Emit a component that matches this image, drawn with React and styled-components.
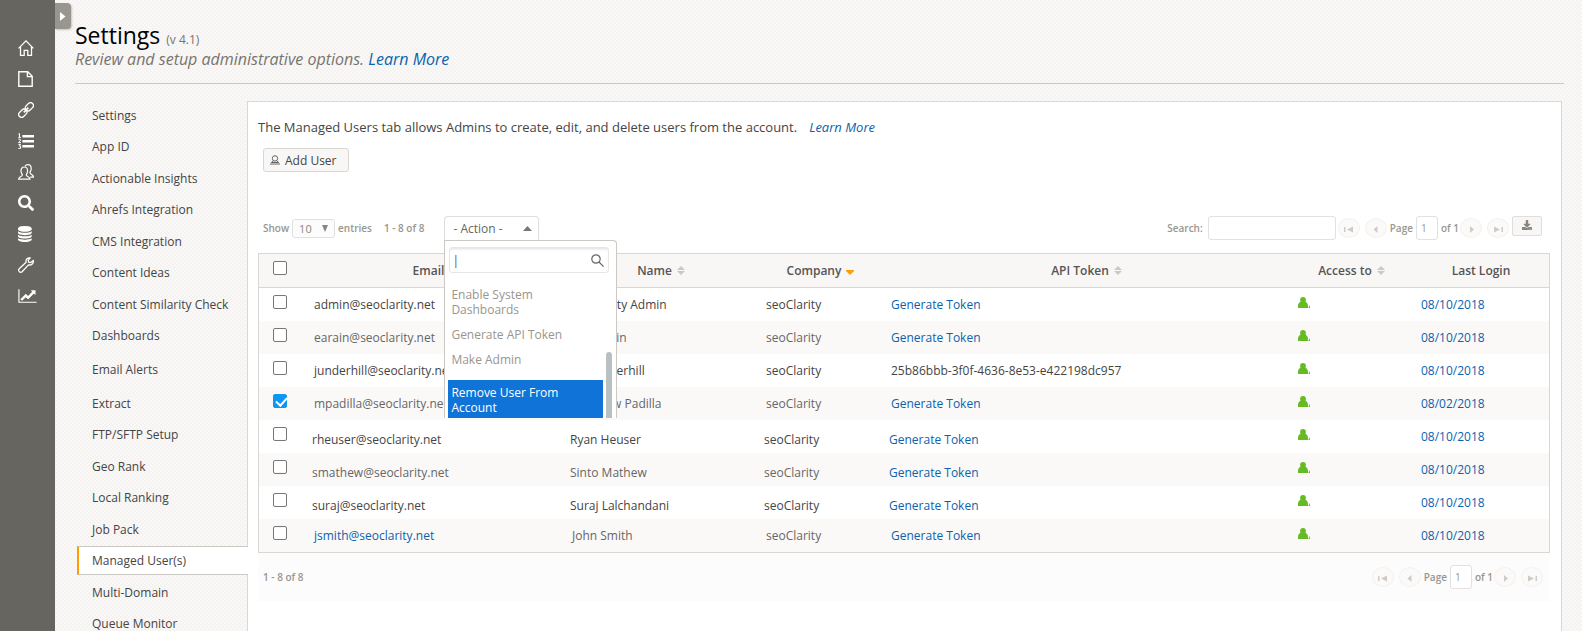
import { useState } from "react";
import styled, { createGlobalStyle, css } from "styled-components";
import { FaSearch, FaDownload } from "react-icons/fa";

const GlobalStyle = createGlobalStyle`
  * {
    box-sizing: border-box;
  }
  body {
    margin: 0;
    color: #444;
    font-family: "Open Sans", sans-serif;
    font-size: 12px;
    line-height: 16px;
    background-color: #f9f8f7;
    background-image:
      radial-gradient(circle at 1px 1px, #f4f3f1 1px, transparent 1px),
      radial-gradient(circle at 3px 3px, #f5f4f3 1px, transparent 1px);
    background-size: 4px 4px;
  }
  button,
  input,
  select {
    font-family: inherit;
  }
  a {
    color: #0b62ad;
    text-decoration: none;
  }
`;

const navGroups = [
  [
    "Settings",
    "App ID",
    "Actionable Insights",
    "Ahrefs Integration",
    "CMS Integration",
    "Content Ideas",
    "Content Similarity Check",
    "Dashboards",
  ],
  ["Email Alerts"],
  [
    "Extract",
    "FTP/SFTP Setup",
    "Geo Rank",
    "Local Ranking",
    "Job Pack",
    "Managed User(s)",
    "Multi-Domain",
    "Queue Monitor",
  ],
];

const columns = [
  { label: "Email", width: 258, sort: "both" },
  { label: "Name", width: 194, sort: "both" },
  { label: "Company", width: 125, sort: "down" },
  { label: "API Token", sort: "both" },
  { label: "Access to", width: 123, sort: "both" },
  { label: "Last Login", width: 136 },
];

const initialUsers = [
  { email: "admin@seoclarity.net", name: "seoClarity Admin", login: "08/10/2018" },
  { email: "earain@seoclarity.net", name: "Ejaz Arain", login: "08/10/2018" },
  {
    email: "junderhill@seoclarity.net",
    name: "Jeff Underhill",
    token: "25b86bbb-3f0f-4636-8e53-e422198dc957",
    login: "08/10/2018",
  },
  { email: "mpadilla@seoclarity.net", name: "Matthew Padilla", login: "08/02/2018", checked: true },
  { email: "rheuser@seoclarity.net", name: "Ryan Heuser", login: "08/10/2018", low: true },
  { email: "smathew@seoclarity.net", name: "Sinto Mathew", login: "08/10/2018", low: true },
  { email: "suraj@seoclarity.net", name: "Suraj Lalchandani", login: "08/10/2018", low: true },
  { email: "jsmith@seoclarity.net", name: "John Smith", login: "08/10/2018", linked: true },
];

const HomeIcon = () => (
  <svg viewBox="0 0 16 16" fill="none" stroke="currentColor" strokeWidth="1.3">
    <path d="M.6 8.4 8 .9l7.4 7.5M2.500 7v8.300h3.700v-5h3.600v5h3.700V7" />
  </svg>
);

const FileIcon = () => (
  <svg viewBox="0 0 16 16" fill="none" stroke="currentColor" strokeWidth="1.4">
    <path d="M.8.8h8.900l4.500 4.500v9.900H.8zM9.400.8v4.800h4.800" />
  </svg>
);

const LinkIcon = () => (
  <svg viewBox="0 0 16 16" fill="none" stroke="currentColor" strokeWidth="1.3">
    <rect x="6.7" y="1.9" width="9.2" height="5.8" rx="2.9" transform="rotate(-45 11.3 4.8)" />
    <rect x=".2" y="8.4" width="9.2" height="5.8" rx="2.9" transform="rotate(-45 4.8 11.3)" />
    <path d="M5.800 10.300l4.600-4.600" strokeWidth="1.8" />
  </svg>
);

const ListIcon = () => (
  <svg viewBox="0 0 16 16" fill="none" stroke="currentColor">
    <path d="M4.400 3.200H16M4.400 8.200H16M4.400 13.200H16" strokeWidth="2.6" />
    <path d="M.4 1.200l1.100-.7v3.600M.3 4.400h2.600M.4 6.200h1.900v1.600L.5 9.600h2.400M.4 11.400h2.200l-1.200 1.700h1.200v2.300H.3" strokeWidth="1" />
  </svg>
);

const GroupIcon = () => (
  <svg viewBox="0 0 16 16" fill="none" stroke="currentColor" strokeWidth="1.2">
    <path d="M.6 15.200c0-2.800 3.700-2.600 3.700-4.200 0-.9-1.300-1.700-1.300-4 0-2.500 1.300-4 3.300-4s3.300 1.500 3.300 4c0 2.300-1.300 3.100-1.300 4 0 1.600 3.700 1.400 3.700 4.200z" />
    <path d="M7 2.200C7.600 1.200 8.600.7 9.900.7c2 0 3.300 1.500 3.300 4 0 2.300-1.300 3.100-1.300 4 0 1.600 3.600 1.500 3.600 4.400h-3.300" />
  </svg>
);

const DatabaseIcon = () => (
  <svg viewBox="0 0 1536 1792" preserveAspectRatio="xMinYMid" fill="currentColor">
    <path d="M768 768q237 0 443-43t325-127v170q0 69-103 128t-280 93.500-385 34.500-385-34.500-280-93.500-103-128v-170q119 84 325 127t443 43zm0 768q237 0 443-43t325-127v170q0 69-103 128t-280 93.500-385 34.500-385-34.500-280-93.500-103-128v-170q119 84 325 127t443 43zm0-384q237 0 443-43t325-127v170q0 69-103 128t-280 93.500-385 34.500-385-34.500-280-93.500-103-128v-170q119 84 325 127t443 43zm0-1152q208 0 385 34.500t280 93.500 103 128v128q0 69-103 128t-280 93.500-385 34.500-385-34.500-280-93.500-103-128v-128q0-69 103-128t280-93.500 385-34.500z" />
  </svg>
);

const WrenchIcon = () => (
  <svg viewBox="0 0 16 16" fill="none" stroke="currentColor" strokeWidth="1.3" strokeLinejoin="round">
    <path d="M12.300.9C9.700.3 7.500 2.400 8.100 5.300L1.200 11.800c-1.700 2 .9 4.600 2.900 2.900L10.500 7.900c3 .6 5.400-1.500 4.800-4.500l-2.500 2.200-2.200-.5-.4-2z" />
  </svg>
);

const ChartIcon = () => (
  <svg viewBox="0 0 2048 1792" fill="currentColor">
    <path d="M2048 1536v128h-2048v-1536h128v1408h1920zM1920 288v435q0 21-19.500 29.500t-35.500-7.500l-121-121-633 633q-10 10-23 10t-23-10l-233-233-416 416-192-192 585-585q10-10 23-10t23 10l233 233 464-464-121-121q-16-16-7.500-35.500t29.500-19.500h435q14 0 23 9t9 23z" />
  </svg>
);

const PersonOutlineIcon = () => (
  <svg width="10" height="10" viewBox="0 0 10 10" fill="none" stroke="#666" strokeWidth="1">
    <circle cx="5" cy="3.4" r="2.7" />
    <path d="M3.500 5.700 1.300 7.500h7.400L6.500 5.700" />
    <path d="M0 9h10" />
  </svg>
);

const UserIcon = () => (
  <svg width="12" height="12" viewBox="0 0 12 12" fill="#66bb22">
    <circle cx="5" cy="3" r="2.9" />
    <path d="M0 11V9C0 6.500 1.300 5.400 2.600 4.800h4.800C8.700 5.400 10 6.500 10 9v2zM10.600 10h.6V8.500h.8V11h-1.400z" />
  </svg>
);

const MagnifierIcon = () => (
  <svg width="13" height="13" viewBox="0 0 13 13" fill="none" stroke="#666" strokeWidth="1.2">
    <circle cx="5" cy="5" r="4.2" />
    <path d="M8 8l4.600 4.600" />
  </svg>
);

const SortIcon = ({ kind }) =>
  kind === "down" ? (
    <svg width="8" height="8" viewBox="0 0 8 8" fill="#ff9c00">
      <path d="M0 3h8v1L4 8 0 4z" />
    </svg>
  ) : (
    <svg width="8" height="9" viewBox="0 0 8 9" fill="#ccc9c4">
      <path d="M4 0l4 4H0zM0 5h8L4 9z" />
    </svg>
  );

const PagerIcon = ({ dir, end }) => (
  <svg width="9" height="7" viewBox="0 0 9 7" fill="#cfccc8">
    {dir === "prev" ? <path d={end ? "M9 .5v6L3 3.500z" : "M6.500 0v7l-4-3.500z"} /> : <path d={end ? "M0 .5v6l6-3z" : "M3 0v7l4-3.500z"} />}
    {end && <path d={dir === "prev" ? "M0 1h1.500v5H0z" : "M7.500 1H9v5H7.500z"} />}
  </svg>
);

const sideLinks = [
  ["Home", HomeIcon],
  ["Pages", FileIcon],
  ["Links", LinkIcon],
  ["Rankings", ListIcon],
  ["Competitors", GroupIcon],
  ["Search", FaSearch],
  ["Data", DatabaseIcon],
  ["Tools", WrenchIcon],
  ["Reports", ChartIcon],
];

const Pager = ({ id }) => (
  <PagerWrap>
    <PagerButton aria-label="First page">
      <PagerIcon dir="prev" end />
    </PagerButton>
    <PagerButton aria-label="Previous page">
      <PagerIcon dir="prev" />
    </PagerButton>
    <PageField>
      <label htmlFor={id}>Page</label>
      <PageInput id={id} defaultValue="1" />
      <span>of 1</span>
    </PageField>
    <PagerButton aria-label="Next page">
      <PagerIcon dir="next" />
    </PagerButton>
    <PagerButton aria-label="Last page">
      <PagerIcon dir="next" end />
    </PagerButton>
  </PagerWrap>
);

const App = () => {
  const [users, setUsers] = useState(initialUsers);
  const [open, setOpen] = useState(true);

  const toggle = (email) => {
    setUsers(users.map((u) => (u.email === email ? { ...u, checked: !u.checked } : u)));
  };

  return (
    <>
      <GlobalStyle />
      <Page>
        <SideBar>
          {sideLinks.map(([label, Icon]) => (
            <SideLink key={label} href="#" aria-label={label} $wide={label === "Reports"}>
              <Icon />
            </SideLink>
          ))}
          <Expand aria-label="Expand menu">
            <svg width="6" height="9" viewBox="0 0 6 9" fill="#fff">
              <path d="M0 0l5.500 4.500L0 9z" />
            </svg>
          </Expand>
        </SideBar>
        <Main>
          <Header>
            <Title>
              Settings <small>(v 4.1)</small>
            </Title>
            <Tagline>
              Review and setup administrative options. <a href="#">Learn More</a>
            </Tagline>
          </Header>
          <Body>
            <Nav>
              {navGroups.map((group) => (
                <ul key={group[0]}>
                  {group.map((item) => (
                    <NavItem key={item} $active={item === "Managed User(s)"}>
                      <a href="#">{item}</a>
                    </NavItem>
                  ))}
                </ul>
              ))}
            </Nav>
            <Panel>
              <Intro>
                The Managed Users tab allows Admins to create, edit, and delete users from the account.
                <a href="#">Learn More</a>
              </Intro>
              <AddButton>
                <PersonOutlineIcon />
                Add User
              </AddButton>
              <Toolbar>
                <label htmlFor="length">Show</label>
                <LengthSelect>
                  <select id="length" defaultValue="10">
                    <option>10</option>
                    <option>25</option>
                  </select>
                  <svg width="6" height="7" viewBox="0 0 6 7" fill="#888580">
                    <path d="M0 0h6L3 7z" />
                  </svg>
                </LengthSelect>
                <span>entries</span>
                <Range>1 - 8 of 8</Range>
                <ActionWrap>
                  <ActionButton onClick={() => setOpen(!open)}>
                    - Action -
                    <svg width="9" height="5" viewBox="0 0 9 5" fill="#777">
                      <path d="M4.500 0L9 5H0z" />
                    </svg>
                  </ActionButton>
                  {open && (
                    <Menu>
                      <MenuSearch>
                        <input aria-label="Search actions" defaultValue="|" />
                        <MagnifierIcon />
                      </MenuSearch>
                      <MenuBody>
                        <MenuList>
                          <li>Enable System Dashboards</li>
                          <li>Generate API Token</li>
                          <li>Make Admin</li>
                          <MenuActive>Remove User From Account</MenuActive>
                        </MenuList>
                        <MenuThumb />
                      </MenuBody>
                    </Menu>
                  )}
                </ActionWrap>
                <Tools>
                  <label htmlFor="search">Search:</label>
                  <SearchInput id="search" />
                  <Pager id="page-top" />
                  <DownloadButton aria-label="Download">
                    <FaDownload />
                  </DownloadButton>
                </Tools>
              </Toolbar>
              <Table>
                <colgroup>
                  <Col $width={47} />
                  {columns.map((c) => (
                    <Col key={c.label} $width={c.width} />
                  ))}
                </colgroup>
                <thead>
                  <tr>
                    <CheckHead>
                      <Check type="checkbox" aria-label="Select all" />
                    </CheckHead>
                    {columns.map((c) => (
                      <th key={c.label}>
                        <HeadLabel>
                          {c.label}
                          {c.sort && <SortIcon kind={c.sort} />}
                        </HeadLabel>
                      </th>
                    ))}
                  </tr>
                </thead>
                <tbody>
                  {users.map((u) => (
                    <Row key={u.email}>
                      <CheckCell>
                        <Check
                          type="checkbox"
                          aria-label={`Select ${u.name}`}
                          checked={!!u.checked}
                          onChange={() => toggle(u.email)}
                        />
                      </CheckCell>
                      <InfoCell $low={u.low}>{u.linked ? <a href="#">{u.email}</a> : u.email}</InfoCell>
                      <InfoCell $low={u.low}>{u.name}</InfoCell>
                      <InfoCell $low={u.low}>seoClarity</InfoCell>
                      <InfoCell $low={u.low}>{u.token || <a href="#">Generate Token</a>}</InfoCell>
                      <AccessCell>
                        <a href="#" aria-label="Access">
                          <UserIcon />
                        </a>
                      </AccessCell>
                      <td>
                        <a href="#">{u.login}</a>
                      </td>
                    </Row>
                  ))}
                </tbody>
              </Table>
              <TableFooter>
                <span>1 - 8 of 8</span>
                <Pager id="page-bottom" />
              </TableFooter>
            </Panel>
          </Body>
        </Main>
      </Page>
    </>
  );
};

const Page = styled.div`
  display: flex;
  height: 100vh;
  overflow: hidden;
`;

const SideBar = styled.nav`
  position: relative;
  flex: none;
  width: 55px;
  padding: 32px 0 0 18px;
  background: #66655f;
`;

const SideLink = styled.a`
  display: flex;
  align-items: center;
  height: 31px;
  color: #fff;
  svg {
    width: ${(p) => (p.$wide ? 19 : 16)}px;
    height: 16px;
  }
`;

const Expand = styled.button`
  position: absolute;
  left: 55px;
  top: 3px;
  width: 16px;
  height: 26px;
  padding: 0 0 0 5px;
  display: flex;
  align-items: center;
  border: 0;
  border-radius: 0 4px 4px 0;
  background: #99968f;
  box-shadow: 1px 1px 2px rgba(0, 0, 0, 0.2);
`;

const Main = styled.main`
  flex: 1;
  min-width: 0;
  padding: 24px 20px 0;
`;

const Header = styled.header`
  height: 60px;
  margin-right: -2px;
  border-bottom: 1px solid #cccac8;
`;

const Title = styled.h1`
  margin: 0;
  color: #000;
  font-size: 23px;
  font-weight: 500;
  line-height: 22px;
  small {
    color: #77746f;
    font-size: 12px;
  }
`;

const Tagline = styled.p`
  margin: 0;
  color: #77746f;
  font-size: 16px;
  font-style: italic;
  line-height: 16px;
`;

const Body = styled.div`
  display: flex;
  padding-top: 17px;
`;

const Nav = styled.nav`
  flex: none;
  width: 173px;
  margin-right: -1px;
  z-index: 1;
  ul {
    margin: 0 0 5px;
    padding: 0;
    list-style: none;
  }
`;

const NavItem = styled.li`
  height: 29px;
  margin-bottom: 2px;
  margin-left: 2px;
  border: solid transparent;
  border-width: 1px 0 1px 2px;
  line-height: 27px;
  &:nth-child(even) {
    margin-bottom: 3px;
  }
  a {
    display: block;
    padding-left: 13px;
    color: #444;
  }
  ${(p) =>
    p.$active &&
    css`
      background: #fff;
      border-color: #ccc9c5;
      border-left-color: #ff9c00;
    `}
`;

const Panel = styled.section`
  flex: 1;
  min-width: 0;
  min-height: 540px;
  padding: 15px 11px 0 10px;
  background: #fff;
  border: 1px solid #d9d8d6;
`;

const Intro = styled.p`
  margin: 0;
  font-size: 13px;
  line-height: 20px;
  a {
    margin-left: 12px;
    font-style: italic;
  }
`;

const AddButton = styled.button`
  display: flex;
  align-items: center;
  gap: 5px;
  height: 24px;
  margin: 11px 0 0 5px;
  padding: 0 11px 0 6px;
  color: #444;
  font-size: 12px;
  background: #f8f7f6;
  border: 1px solid #d9d7d4;
  border-radius: 3px;
`;

const Toolbar = styled.div`
  display: flex;
  align-items: center;
  height: 24px;
  margin-top: 44px;
  padding: 0 8px 0 5px;
  color: #99968f;
  font-size: 10px;
  font-weight: 600;
`;

const LengthSelect = styled.div`
  display: flex;
  align-items: center;
  width: 43px;
  height: 19px;
  margin: 0 3px;
  padding-right: 6px;
  background: #fcfcfc;
  border: 1px solid #e3e1df;
  border-radius: 3px;
  select {
    appearance: none;
    flex: 1;
    min-width: 0;
    padding: 0 0 0 6px;
    color: #88857f;
    font-size: 11px;
    background: none;
    border: 0;
  }
`;

const Range = styled.span`
  margin-left: 12px;
`;

const ActionWrap = styled.div`
  position: relative;
  margin-left: 20px;
`;

const ActionButton = styled.button`
  display: flex;
  align-items: center;
  justify-content: space-between;
  width: 95px;
  height: 24px;
  padding: 0 6px 0 8px;
  color: #666;
  font-size: 12px;
  background: #fff;
  border: 1px solid #e0deda;
  border-bottom: 0;
  border-radius: 4px 4px 0 0;
`;

const Menu = styled.div`
  position: absolute;
  left: 0;
  top: 24px;
  z-index: 2;
  width: 173px;
  height: 178px;
  padding: 6px 4px 0 3px;
  overflow: hidden;
  color: #99968f;
  font-size: 12px;
  font-weight: 400;
  line-height: 15px;
  background: #fff;
  border: 1px solid #ccc9c4;
  border-bottom: 0;
  border-radius: 0 4px 0 0;
`;

const MenuSearch = styled.div`
  display: flex;
  align-items: center;
  width: 160px;
  height: 26px;
  padding-right: 4px;
  margin-left: 1px;
  border: 1px solid #e8e6e3;
  border-radius: 3px;
  box-shadow: inset 0 3px 3px -2px #ddd;
  input {
    flex: 1;
    min-width: 0;
    padding: 0 2px;
    color: #555;
    font-size: 12px;
    background: none;
    border: 0;
    outline: 0;
  }
`;

const MenuBody = styled.div`
  display: flex;
  justify-content: space-between;
  padding-top: 9px;
`;

const MenuList = styled.ul`
  width: 155px;
  margin: 0;
  padding: 0;
  list-style: none;
  li {
    padding: 5px 3px;
  }
`;

const MenuActive = styled.li`
  margin-top: 8px;
  color: #fff;
  background: #0f73d8;
`;

const MenuThumb = styled.div`
  width: 6px;
  height: 80px;
  margin-top: 70px;
  background: #b9c0c2;
  border-radius: 3px 3px 0 0;
`;

const Tools = styled.div`
  display: flex;
  align-items: center;
  margin-left: auto;
`;

const SearchInput = styled.input`
  width: 128px;
  height: 24px;
  margin: 0 2px 0 5px;
  border: 1px solid #e3e1df;
  border-radius: 3px;
`;

const PagerWrap = styled.div`
  display: flex;
  align-items: center;
  gap: 5px;
`;

const PagerButton = styled.button`
  display: flex;
  align-items: center;
  justify-content: center;
  width: 22px;
  height: 20px;
  padding: 3px 0 0;
  background: #fbfaf9;
  border: 1px solid #f3f2f1;
  border-radius: 50%;
`;

const PageField = styled.div`
  display: flex;
  align-items: center;
  gap: 3px;
  margin: 0 -4px 0 -2px;
`;

const PageInput = styled.input`
  width: 22px;
  height: 24px;
  padding: 0 4px;
  color: #99968f;
  font-size: 10px;
  background: #fff;
  border: 1px solid #e3e1df;
  border-radius: 3px;
`;

const DownloadButton = styled.button`
  align-self: flex-start;
  display: flex;
  align-items: center;
  justify-content: center;
  width: 30px;
  height: 20px;
  margin-left: 3px;
  padding: 0 0 3px;
  color: #88857f;
  font-size: 10px;
  background: #f8f7f6;
  border: 1px solid #e0deda;
  border-radius: 2px;
`;

const Table = styled.table`
  width: 100%;
  margin-top: 13px;
  table-layout: fixed;
  border-collapse: separate;
  border-spacing: 0;
  border: 1px solid #d9d7d4;
  th {
    height: 34px;
    padding: 0;
    color: #555;
    font-weight: 600;
    background: #f8f7f6;
    border-bottom: 1px solid #d9d7d4;
  }
  td {
    height: 33px;
    padding: 0 8px;
    white-space: nowrap;
  }
`;

const Col = styled.col`
  width: ${(p) => (p.$width ? `${p.$width}px` : "auto")};
`;

const HeadLabel = styled.div`
  display: flex;
  align-items: center;
  justify-content: center;
  gap: 5px;
`;

const Row = styled.tr`
  color: #444;
  &:nth-child(even) {
    color: #666;
    background: #faf9f8;
  }
`;

const InfoCell = styled.td`
  && {
    padding: ${(p) => (p.$low ? "6px 6px 0" : "0 8px")};
  }
`;

const Check = styled.input`
  appearance: none;
  display: block;
  position: relative;
  width: 14px;
  height: 14px;
  margin: 0;
  background: #fff;
  border: 1px solid #767676;
  border-radius: 2px;
  &:checked {
    background: #0d96f2;
    border-color: #0d96f2;
  }
  &:checked::after {
    content: "";
    position: absolute;
    left: 4px;
    top: 0;
    width: 5px;
    height: 9px;
    border: solid #fff;
    border-width: 0 2px 2px 0;
    transform: rotate(42deg);
  }
`;

const CheckHead = styled.th`
  && {
    padding: 0 0 5px 14px;
  }
`;

const CheckCell = styled.td`
  && {
    padding: 0 0 5px 14px;
  }
`;

const AccessCell = styled.td`
  svg {
    display: block;
    margin-bottom: 3px;
  }
`;

const TableFooter = styled.div`
  display: flex;
  align-items: center;
  justify-content: space-between;
  height: 48px;
  padding: 0 7px 0 5px;
  color: #99968f;
  font-size: 10px;
  font-weight: 600;
  background: #fcfcfc;
`;

export default App;
